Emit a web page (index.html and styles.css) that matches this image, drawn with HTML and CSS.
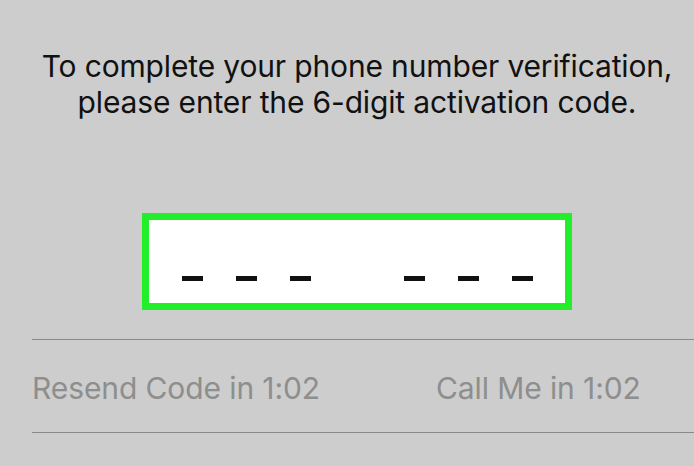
FILE: index.html
```html
<!DOCTYPE html>
<html>
<head>
<meta charset="utf-8">
<link rel="stylesheet" href="styles.css">
</head>
<body>
<main class="screen">
  <p class="prompt">To complete your phone number verification,<br>please enter the 6-digit activation code.</p>
  <div class="code-box">
    <div class="dashes">
      <div class="group"><span class="dash"></span><span class="dash"></span><span class="dash"></span></div>
      <div class="group"><span class="dash"></span><span class="dash"></span><span class="dash"></span></div>
    </div>
  </div>
  <div class="actions">
    <span class="action resend">Resend Code in 1:02</span>
    <span class="action call">Call Me in 1:02</span>
  </div>
</main>
</body>
</html>
```

FILE: styles.css
```css
html, body {
  margin: 0;
  padding: 0;
  background: #cdcdcd;
}
.screen {
  width: 694px;
  height: 466px;
  overflow: hidden;
  font-family: Inter, Roboto, sans-serif;
}
.prompt {
  margin: 0;
  padding: 48px 0 0 20px;
  text-align: center;
  font-size: 30px;
  line-height: 36px;
  letter-spacing: -0.15px;
  color: #111;
  white-space: nowrap;
}
.code-box {
  box-sizing: border-box;
  width: 430px;
  height: 97px;
  margin: 93px 0 0 142px;
  border: 7px solid #22ee2a;
  background: #fff;
  padding: 56px 32px 0 33px;
}
.dashes {
  display: flex;
  justify-content: space-between;
}
.group {
  display: flex;
  gap: 33px;
}
.dash {
  display: block;
  width: 21px;
  height: 5px;
  background: #111;
}
.actions {
  box-sizing: border-box;
  margin: 29px 0 0 32px;
  border-top: 1px solid #8a8a8a;
  border-bottom: 1px solid #8a8a8a;
  height: 94px;
  padding-top: 4px;
  display: flex;
  align-items: center;
  font-size: 30px;
  letter-spacing: -0.1px;
  color: #8e8e8e;
}
.resend {
  width: 404px;
}
```
